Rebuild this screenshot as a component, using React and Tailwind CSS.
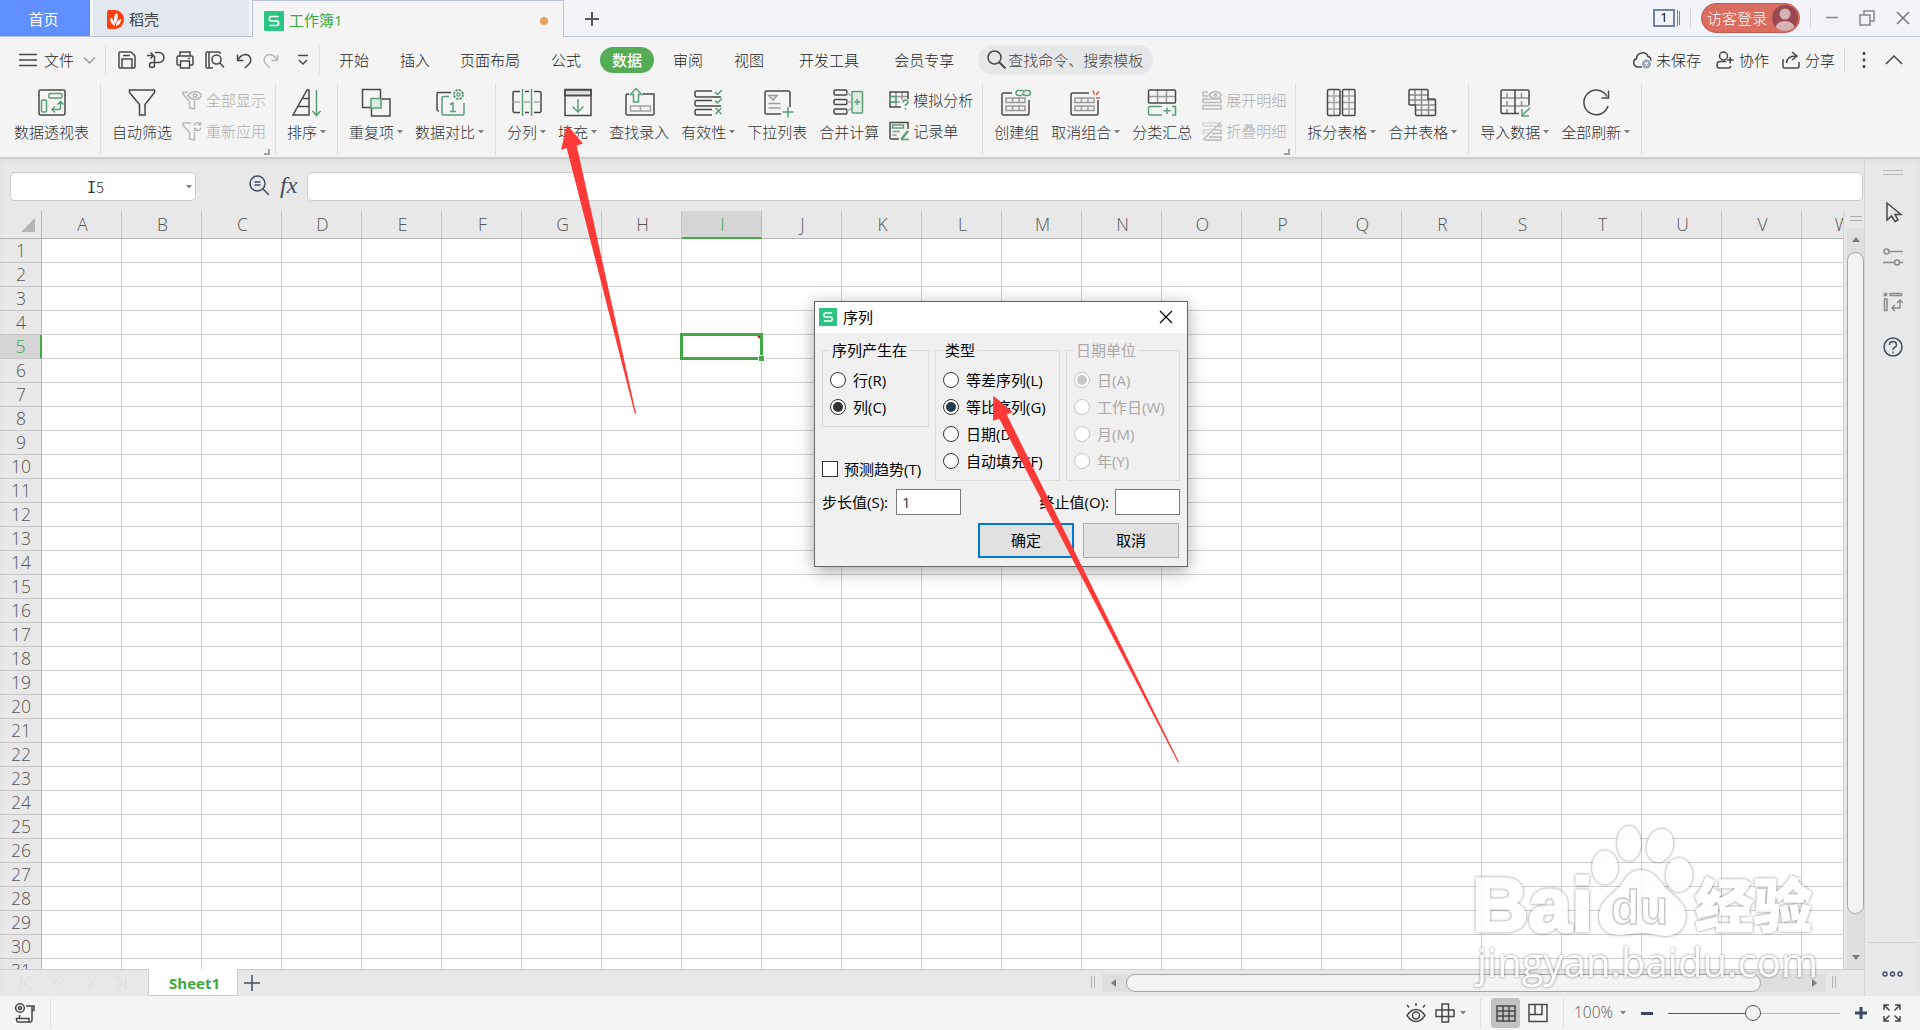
import React from 'react';
import clsx from 'clsx';

const COLUMNS = 'ABCDEFGHIJKLMNOPQRSTUVW'.split('');
const ROWS = Array.from({ length: 31 }, (_, i) => i + 1);

const DARK = '#484848';
const GREEN = '#5a9f79';
const GREY = '#b9b9b9';

function Svg({ w = 32, h = w, color = DARK, sw = 1.5, className, children }) {
  return (
    <svg
      width={w}
      height={h}
      viewBox={`0 0 ${w} ${h}`}
      fill="none"
      stroke={color}
      strokeWidth={sw}
      className={clsx('shrink-0', className)}
    >
      {children}
    </svg>
  );
}

function Caret({ className }) {
  return (
    <svg width="6" height="4" viewBox="0 0 6 4" className={clsx('shrink-0', className)}>
      <path d="M0 0h6L3 3.6z" fill="#808080" />
    </svg>
  );
}

function SheetLogo({ className }) {
  return (
    <svg width="20" height="20" viewBox="0 0 20 20" className={clsx('shrink-0', className)}>
      <rect width="20" height="20" rx="1" fill="#2bc483" />
      <path d="M14.5 5.5H7a1.5 1.5 0 0 0-1.5 1.5v1.5A1.5 1.5 0 0 0 7 10h6a1.5 1.5 0 0 1 1.5 1.5V13a1.5 1.5 0 0 1-1.5 1.5H5.5" fill="none" stroke="#fff" strokeWidth="1.7" />
    </svg>
  );
}

/* Ribbon icons, 32x32 */
const icons = {
  pivot: (
    <Svg>
      <rect x="3" y="4" width="26" height="25" rx="1.5" />
      <g stroke={GREEN}>
        <rect x="13" y="7.5" width="13" height="4.5" rx="1" />
        <rect x="5.5" y="14" width="5" height="12" rx="1" />
        <path d="M24.5 16v5.5a2 2 0 0 1-2 2H16M21.5 18.5l3-3 3 3M19 20.5l-3 3 3 3" />
      </g>
    </Svg>
  ),
  filter: (
    <Svg className="-ml-px">
      <path d="M3.5 4h25v2.5L19 18.5V29h-5.5V18.5L3.5 6.5z" />
    </Svg>
  ),
  sort: (
    <Svg className="-ml-0.5">
      <path d="M19 4v25H3L17 4zM12.5 12.5H19M8 20.5h11" />
      <path d="M26.5 4v25M22.5 25l4 4.5 4-4.5" stroke={GREEN} />
    </Svg>
  ),
  duplicate: (
    <Svg>
      <path d="M12 21.5H2.5V3.5h18V12M21 13h9v17H11.5v-8" />
      <rect x="11" y="12.5" width="10" height="9.5" stroke={GREEN} fill="#dcebe2" />
    </Svg>
  ),
  compare: (
    <Svg>
      <path d="M17 6.5H4.5A1.5 1.5 0 0 0 3 8v15.5a1.5 1.5 0 0 0 1.5 1.5H5" />
      <g stroke={GREEN}>
        <path d="M15 10.5H9.5A1.5 1.5 0 0 0 8 12v15.5A1.5 1.5 0 0 0 9.5 29h19a1.5 1.5 0 0 0 1.5-1.5V17" />
        <path d="M16 18.5l3-1.5v8.5M16 25.5h6" />
        <circle cx="24.5" cy="8.5" r="4.5" strokeDasharray="2.5 1" strokeWidth="2" />
        <circle cx="24.5" cy="8.5" r="1.7" strokeWidth="1.2" />
      </g>
    </Svg>
  ),
  split: (
    <Svg>
      <path d="M9 5.5H3.5A1.5 1.5 0 0 0 2 7v18a1.5 1.5 0 0 0 1.5 1.5H9M14 5.5h4M14 26.5h4M23 5.5h5.5A1.5 1.5 0 0 1 30 7v18a1.5 1.5 0 0 1-1.5 1.5H23" />
      <path d="M2 16h7M13 16h6M23 16h7" stroke="#aaa" />
      <path d="M11.5 3v27M20.5 3v27" stroke={GREEN} />
    </Svg>
  ),
  fill: (
    <Svg>
      <path d="M3 4h26v5.5H3z" fill="#dedede" />
      <path d="M3 3.5h26v26H3zM3 9.5h26" />
      <path d="M16 13v12M10.5 20.5L16 26l5.5-5.5" stroke={GREEN} />
    </Svg>
  ),
  lookup: (
    <Svg className="ml-0.5">
      <path d="M5 8H3.5A1.5 1.5 0 0 0 2 9.5v18A1.5 1.5 0 0 0 3.5 29h25a1.5 1.5 0 0 0 1.5-1.5V8H18.5" />
      <path d="M6.5 20h20v5h-20zM16.5 20v5" stroke="#a3a3a3" />
      <path d="M12 2.5l5.5 6H14.5V16h-5V8.5h-3z" stroke={GREEN} />
    </Svg>
  ),
  valid: (
    <Svg>
      <path d="M20 5H4.5Q3 5 3 6.5v3Q3 11 4.5 11H29M20 14.5H4.5Q3 14.5 3 16v2.5Q3 20 4.5 20H29M20 23.5H4.5Q3 23.5 3 25v2.5Q3 29 4.5 29H20" />
      <path d="M23 6l2.5 2.5L30 4M23 14.5l2.5 2.5L30 12.5M23.5 22l6 6M29.5 22l-6 6" stroke={GREEN} />
    </Svg>
  ),
  dropdown: (
    <Svg className="ml-0.5">
      <path d="M19 28H4.5A1.5 1.5 0 0 1 3 26.5v-20A1.5 1.5 0 0 1 4.5 5h22A1.5 1.5 0 0 1 28 6.5V21" />
      <path d="M7 9.5h8l-4 4.5zM6.5 17.5h12M6.5 22h12" stroke="#9d9d9d" />
      <path d="M26 21v10.5M20.5 26h11" stroke={GREEN} />
    </Svg>
  ),
  consolidate: (
    <Svg className="-ml-0.5">
      <rect x="2" y="4" width="13" height="5" rx="1.5" />
      <rect x="2" y="13.5" width="13" height="5" rx="1.5" />
      <rect x="2" y="23" width="13" height="5" rx="1.5" />
      <path d="M15 6.5l4 3M15 16h4M15 25.5l4-3" stroke="#aaa" />
      <rect x="20" y="5.5" width="10.5" height="21.5" rx="1" stroke={GREEN} fill="#e0ebe4" />
      <path d="M25.25 13v6M22.25 16h6" stroke={GREEN} />
    </Svg>
  ),
  group: (
    <Svg className="-ml-[3px]">
      <path d="M13 7H4.5A1.5 1.5 0 0 0 3 8.5v19A1.5 1.5 0 0 0 4.5 29h24a1.5 1.5 0 0 0 1.5-1.5V14" />
      <path d="M7 12h19v4.5H7zM7 20h19v4.5H7zM13.5 12v4.5M20 12v4.5M13.5 20v4.5M20 20v4.5" stroke="#999" />
      <path d="M23 9.5h-3.5a2.5 2.5 0 0 1 0-5h3a2.5 2.5 0 0 1 2.5 2.5M25.5 4.5H29a2.5 2.5 0 0 1 0 5h-3A2.5 2.5 0 0 1 23.5 7" stroke={GREEN} />
    </Svg>
  ),
  ungroup: (
    <Svg className="-ml-[3px]">
      <path d="M21 7H4.5A1.5 1.5 0 0 0 3 8.5v19A1.5 1.5 0 0 0 4.5 29h24a1.5 1.5 0 0 0 1.5-1.5V14" />
      <path d="M7 12h19v4.5H7zM7 20h19v4.5H7zM13.5 12v4.5M20 12v4.5M13.5 20v4.5M20 20v4.5" stroke="#999" />
      <path d="M25 4.5l1.5 4M31 5.5l-3 3.5M32 12h-4" stroke="#dc5b55" />
    </Svg>
  ),
  subtotal: (
    <Svg>
      <path d="M2.5 10.5h27M11.5 4v12.5M20.5 4v12.5" stroke="#999" />
      <rect x="2.5" y="4" width="27" height="13" rx="1" />
      <path d="M16 20.5H4Q2.5 20.5 2.5 22v6q0 1 1.5 1h12M26 20.5h3.5V29H26M21 21.5v6.5M17.5 24.75h7" stroke={GREEN} />
    </Svg>
  ),
  splitTable: (
    <Svg className="-ml-0.5">
      <path d="M9 3.5v26M3 10h12M3 16.5h12M3 23h12M24 3.5v26M17.5 10H30M17.5 16.5H30M17.5 23H30" stroke="#a5a5a5" />
      <rect x="2.5" y="3.5" width="12.5" height="26" rx="1.5" />
      <rect x="17.5" y="3.5" width="12.5" height="26" rx="1.5" />
    </Svg>
  ),
  mergeTable: (
    <Svg className="-ml-0.5">
      <path d="M9 4v15M15.5 4v25M22.5 13v16M3 9h19M3 14h26M10 19h19M10 24h19" stroke="#8d8d8d" />
      <path d="M4 3.5h17q1 0 1 1V13h6q1.5 0 1.5 1.5V28q0 1.5-1.5 1.5H11q-1.5 0-1.5-1.5v-9H4q-1 0-1-1V4.5q0-1 1-1z" />
    </Svg>
  ),
  importData: (
    <Svg>
      <path d="M2 12h28M2 20h28M8 7v5M8 15v5M8 23v4M22.5 7v5M22.5 15v5" stroke="#909090" />
      <path d="M20 27.5H3.5A1.5 1.5 0 0 1 2 26V5.5A1.5 1.5 0 0 1 3.5 4h25A1.5 1.5 0 0 1 30 5.5V19M16 4v23.5" />
      <path d="M31 22l-8 7.5M23 23v7h7" stroke={GREEN} />
    </Svg>
  ),
  refresh: (
    <Svg>
      <path d="M28 20A12.3 12.3 0 1 1 27 10.5M28.5 4.5v7.5h-7" />
    </Svg>
  ),
};

/* Small icons for the two-row stacks, 20x20 */
const smallIcons = {
  showAll: (
    <Svg w={20} color={GREY}>
      <path d="M6 2H1v2l6.5 7.5V18l5 1v-8" />
      <path d="M6 5.5Q9 1.5 13 1.5t7 4Q17 9.5 13 9.5T6 5.5z" />
      <circle cx="13" cy="5.5" r="1.8" />
    </Svg>
  ),
  reapply: (
    <Svg w={20} color={GREY}>
      <path d="M9 2H1v2l6.5 7.5V18l5 1v-8" />
      <path d="M12 4.5A3.5 3.5 0 0 1 18 3M18.5 1v3H16M19 6.5a3.5 3.5 0 0 1-6 2M12.5 10V7.5H15" />
    </Svg>
  ),
  whatIf: (
    <Svg w={20}>
      <path d="M1 6.5h18M7 2v15M13 2v8M1 12h10" stroke="#999" />
      <path d="M12 17H1V2h18v7" />
      <path d="M1 6.5h6V12H1zM14 12.5q0-2.5 2.5-2.5t2.5 2.2q0 1.3-2.5 2.8v1M16.5 18v1.5" stroke={GREEN} />
    </Svg>
  ),
  form: (
    <Svg w={20}>
      <path d="M10 18H2q-1 0-1-1V1.5h18V8" />
      <path d="M3.5 4h11v3h-11z" stroke={GREEN} />
      <path d="M3.5 10.5H11M3.5 14h4" stroke="#999" />
      <path d="M19 10l-6.5 8" stroke={GREEN} strokeWidth="2.5" />
      <path d="M12 18.5h8" stroke={GREEN} />
    </Svg>
  ),
  expand: (
    <Svg w={20} color={GREY}>
      <path d="M6 2H1v4h5M1 9h18v3.5H1zM1 15.5h18V19H1z" />
      <path d="M7 5Q10 1.5 13.5 1.5T20 5q-3 3.5-6.5 3.5T7 5z" />
      <circle cx="13.5" cy="5" r="1.2" />
    </Svg>
  ),
  collapse: (
    <Svg w={20} color={GREY}>
      <path d="M1 2h16M1 5h13M1 2v3M1 9h9M1 9v3h6" opacity="0.5" />
      <path d="M19 3v2.5h-3M13 9h6v3.5h-9M7 16h12v3H3" />
      <path d="M1 19L19 1" />
    </Svg>
  ),
};

function RibbonItem({ icon, label, caret }) {
  return (
    <div className="flex flex-col items-center">
      {icons[icon]}
      <div className="mt-[3px] flex h-[22px] items-center gap-[3px]">
        <span>{label}</span>
        {caret && <Caret />}
      </div>
    </div>
  );
}

function RibbonStack({ items, disabled, corner }) {
  return (
    <div className={clsx('relative -mx-0.5 flex flex-col gap-[9px] pt-[3px]', disabled && 'text-[#adadad]')}>
      {items.map(([icon, label]) => (
        <div key={label} className="flex h-[22px] items-center gap-1">
          {smallIcons[icon]}
          <span>{label}</span>
        </div>
      ))}
      {corner && <div className="absolute right-[-4px] bottom-0 h-1.5 w-1.5 border-r-2 border-b-2 border-[#a0a0a0]" />}
    </div>
  );
}

function RibbonGroup({ children, className }) {
  return <div className={clsx('flex h-[72px] gap-3 border-r border-[#dedede] px-[11px] pt-[3px]', className)}>{children}</div>;
}

function TitleBar() {
  return (
    <div className="flex h-[37px] bg-[#f2f4f9] text-[15px]">
      <div className="flex w-[90px] items-center justify-center border-b border-[#b9c3d9] bg-[#608fff] pt-[3px] pr-[3px] font-normal text-white">首页</div>
      <div className="w-[3px] border-b border-[#b9c3d9]" />
      <div className="flex w-[156px] items-center gap-[5px] border-b border-[#b9c3d9] bg-[#e3e7f0] pt-[3px] pl-[14px] font-normal text-[#444]">
        <svg width="17" height="19" viewBox="0 0 17 19">
          <path d="M2 0h6a9 9.5 0 0 1 0 19H2a2 2 0 0 1-2-2V2a2 2 0 0 1 2-2z" fill="#fd4210" />
          <path d="M8 16C4 14 3 11 3.5 8c3 1 4 4 4.5 8zM8 14C6 9 7 5 10 3c1.5 4 .5 8-2 11zM9 16c0-4 2-6 5-7 0 4-2 6-5 7z" fill="#fff" />
        </svg>
        <span>稻壳</span>
      </div>
      <div className="w-[3px] border-b border-[#b9c3d9]" />
      <div className="flex w-[312px] items-center border-x border-t border-[#b9c3d9] bg-[#f4f4f4] pt-[3px] pl-[11px] font-normal text-[#3ea83e]">
        <SheetLogo />
        <span className="ml-[5px]">工作簿1</span>
        <div className="mr-[15px] ml-auto h-2 w-2 rounded-full bg-[#e6a15c]" />
      </div>
      <div className="flex flex-1 items-center border-b border-[#b9c8dd]">
        <Svg w={16} sw={2} color="#5a5a5a" className="mt-0.5 ml-5"><path d="M8 1v14M1 8h14" /></Svg>
        <div className="ml-auto flex h-[18px] w-[22px] items-center justify-center border-2 border-[#76829f] text-[13px] font-normal text-black">1</div>
        <div className="ml-0.5 h-4 w-px bg-[#76829f]" />
        <div className="ml-px h-3.5 w-px bg-[#76829f]" />
        <div className="ml-[10px] h-[22px] w-px bg-[#d3d6dc]" />
        <div className="ml-[10px] flex h-[30px] w-[99px] items-center justify-between rounded-full border border-[#c8594e] bg-[#da6d60] pr-px pl-[5px] text-white">
          <span>访客登录</span>
          <svg width="26" height="26" viewBox="0 0 26 26">
            <defs>
              <clipPath id="avatar"><circle cx="13" cy="13" r="13" /></clipPath>
            </defs>
            <g clipPath="url(#avatar)">
              <rect width="26" height="26" fill="#984850" />
              <circle cx="13" cy="9" r="5.5" fill="#d6b2b5" />
              <ellipse cx="13" cy="23" rx="9.5" ry="7" fill="#d6b2b5" />
            </g>
          </svg>
        </div>
        <div className="ml-[10px] h-[22px] w-px bg-[#d3d6dc]" />
        <Svg w={14} color="#888" className="ml-[14px]"><path d="M1 6.5h12" /></Svg>
        <Svg w={16} color="#888" className="ml-[20px]"><path d="M1 5h10v10H1zM5 5V1h10v10h-4" /></Svg>
        <Svg w={14} color="#777" className="mr-[10px] ml-[21px]"><path d="M1 1l12 12M13 1L1 13" /></Svg>
      </div>
    </div>
  );
}

function MenuBar() {
  return (
    <div className="flex h-[46px] items-center text-[15px] text-[#222]">
      <Svg w={18} className="ml-[19px]"><path d="M0 3.5h18M0 9h18M0 14.5h18" /></Svg>
      <span className="ml-[7px]">文件</span>
      <Svg w={13} color="#999" className="ml-[9px]"><path d="M1 3.5L6.5 9 12 3.5" /></Svg>
      <div className="ml-[9px] h-[30px] w-px bg-[#dcdcdc]" />
      <Svg w={18} className="ml-3">
        <path d="M1 2q0-1 1-1h11l4 4v11q0 1-1 1H2q-1 0-1-1zM4 17V8h10v9M5 4.5h7" />
      </Svg>
      <Svg w={18} className="ml-[11px]">
        <path d="M0 4.5h6M3.5 1.5l3 3-3 3M8 1.5h4a5 5 0 0 1 0 10H5a2.5 2.5 0 1 0 2.5 2.5V5" />
      </Svg>
      <Svg w={18} className="ml-[11px]">
        <path d="M4 5V1h10v4M4 14H2q-1 0-1-1V6.5Q1 5 2.5 5h13Q17 5 17 6.5V13q0 1-1 1h-2M4.5 10h9v7h-9zM12 7.5h2" />
      </Svg>
      <Svg w={20} h={18} className="ml-[11px]">
        <path d="M8 17H2q-1 0-1-1V2q0-1 1-1h12q1 0 1 1v1M4 1v16M15 12l4 4.5" />
        <circle cx="11.5" cy="8.5" r="4.5" />
      </Svg>
      <Svg w={16} h={18} className="ml-[11px]"><path d="M1.5 3.5v6h6M1.5 9.5Q5 3.5 9.5 3.5A5.5 5.5 0 0 1 13 13l-4 4" /></Svg>
      <Svg w={16} h={18} color={GREY} className="ml-[11px]"><path d="M14.5 3.5v6h-6M14.5 9.5Q11 3.5 6.5 3.5A5.5 5.5 0 0 0 3 13l4 4" /></Svg>
      <Svg w={10} h={14} className="ml-[19px]"><path d="M0 2.5h10M1 7l4 4 4-4" /></Svg>
      <div className="ml-[11px] h-[30px] w-px bg-[#dcdcdc]" />
      <span className="ml-[19px]">开始</span>
      <span className="ml-[31px]">插入</span>
      <span className="ml-[30px]">页面布局</span>
      <span className="ml-[31px]">公式</span>
      <div className="ml-[19px] flex h-[26px] w-[54px] items-center justify-center rounded-full bg-[#54ad54] font-medium text-white">数据</div>
      <span className="ml-[19px]">审阅</span>
      <span className="ml-[31px]">视图</span>
      <span className="ml-[35px]">开发工具</span>
      <span className="ml-[35px]">会员专享</span>
      <div className="ml-[24px] flex h-[30px] w-[175px] items-center rounded-full bg-[#e6e7e8] pl-[9px] text-[#404040]">
        <Svg w={20}><circle cx="7.5" cy="7.5" r="6.5" /><path d="M12 12l6.5 6.5" strokeWidth="2" /></Svg>
        <span className="ml-px">查找命令、搜索模板</span>
      </div>
      <Svg w={20} h={18} className="ml-auto">
        <path d="M10 16H5a4.500 4.500 0 0 1-.5-8.500A6 6 0 0 1 16 5.500q3 .5 3 4" />
        <circle cx="14.5" cy="13" r="4.5" fill="#9aa5b6" stroke="none" />
        <path d="M13 11.5l3 3M16 11.5l-3 3" stroke="#fff" strokeWidth="1.2" />
      </Svg>
      <span className="ml-1">未保存</span>
      <Svg w={18} className="ml-[15px]">
        <circle cx="7.5" cy="5" r="4" />
        <path d="M10.5 10.5H4Q1 10.5 1 14q0 3 2 3h10q1.5 0 1.5-2M11 9h6.5M14.25 6v6.5" />
      </Svg>
      <span className="ml-[5px]">协作</span>
      <Svg w={18} className="ml-[13px]"><path d="M1 8v7.5Q1 17 2.5 17h13q1.5 0 1.5-1.5V11M4.5 12Q5 5 13.5 5M10 1l5 4-5 4" /></Svg>
      <span className="ml-[5px]">分享</span>
      <div className="ml-[9px] h-[26px] w-px bg-[#dcdcdc]" />
      <Svg w={4} h={18} className="ml-[17px]"><path d="M2 1v3M2 7.5v3M2 14v3" strokeWidth="2.5" /></Svg>
      <Svg w={18} h={12} className="mr-[17px] ml-[19px]"><path d="M1 10l8-8 8 8" /></Svg>
    </div>
  );
}

function Ribbon() {
  return (
    <div className="flex h-[74px] text-[15px] leading-[22px] whitespace-nowrap text-[#303030]">
      <RibbonGroup className="pl-[14px]">
        <RibbonItem icon="pivot" label="数据透视表" />
      </RibbonGroup>
      <RibbonGroup>
        <RibbonItem icon="filter" label="自动筛选" />
        <RibbonStack disabled corner items={[['showAll', '全部显示'], ['reapply', '重新应用']]} />
      </RibbonGroup>
      <RibbonGroup>
        <RibbonItem icon="sort" label="排序" caret />
      </RibbonGroup>
      <RibbonGroup>
        <RibbonItem icon="duplicate" label="重复项" caret />
        <RibbonItem icon="compare" label="数据对比" caret />
      </RibbonGroup>
      <RibbonGroup>
        <RibbonItem icon="split" label="分列" caret />
        <RibbonItem icon="fill" label="填充" caret />
        <RibbonItem icon="lookup" label="查找录入" />
        <RibbonItem icon="valid" label="有效性" caret />
        <RibbonItem icon="dropdown" label="下拉列表" />
        <RibbonItem icon="consolidate" label="合并计算" />
        <RibbonStack items={[['whatIf', '模拟分析'], ['form', '记录单']]} />
      </RibbonGroup>
      <RibbonGroup>
        <RibbonItem icon="group" label="创建组" />
        <RibbonItem icon="ungroup" label="取消组合" caret />
        <RibbonItem icon="subtotal" label="分类汇总" />
        <RibbonStack disabled corner items={[['expand', '展开明细'], ['collapse', '折叠明细']]} />
      </RibbonGroup>
      <RibbonGroup>
        <RibbonItem icon="splitTable" label="拆分表格" caret />
        <RibbonItem icon="mergeTable" label="合并表格" caret />
      </RibbonGroup>
      <RibbonGroup>
        <RibbonItem icon="importData" label="导入数据" caret />
        <RibbonItem icon="refresh" label="全部刷新" caret />
      </RibbonGroup>
    </div>
  );
}

function FormulaBar() {
  return (
    <div className="flex h-[54px] items-start pt-[15px]">
      <div className="ml-[10px] flex h-[29px] w-[186px] items-center rounded-[5px] border border-[#cbcbcb] bg-white">
        <span className="mt-0.5 ml-[76px] font-['Noto_Sans_CJK_SC',sans-serif] text-[15px] text-[#333]">
          <span className="font-['DejaVu_Sans_Mono',monospace] text-[15px]">I</span>5
        </span>
        <Caret className="mr-[3px] ml-auto" />
      </div>
      <Svg w={21} color="#414c66" className="mt-[3px] ml-[53px]">
        <circle cx="8.5" cy="8.5" r="7.5" />
        <path d="M14 14l6 6M5.5 7h6M5.5 10h6" />
      </Svg>
      <span className="ml-[10px] w-[27px] font-['Liberation_Serif',serif] text-[24px] leading-[26px] text-[#414c66] italic">fx</span>
      <div className="h-[29px] flex-1 rounded-[5px] border border-[#cbcbcb] bg-white" />
      <div className="w-px" />
    </div>
  );
}

function Grid() {
  return (
    <div className="relative h-[758px] w-[1843px] overflow-hidden font-normal">
      <div className="flex h-7 w-[1882px]">
        <div className="flex w-[42px] items-end justify-end border-r border-b border-[#b4b4b4] pr-1.5 pb-1.5">
          <svg width="14" height="14"><path d="M14 0v14H0z" fill="#b5b5b5" /></svg>
        </div>
        {COLUMNS.map((c) => (
          <div
            key={c}
            className={clsx(
              'flex w-20 items-center justify-center border-r pl-[2px] text-[17.5px] font-light',
              c === 'I'
                ? 'border-r-[#bbb] border-b-2 border-b-[#43aa43] bg-[#d5d5d5] text-[#3ea83e]'
                : 'border-r-[#c6c6c6] border-b border-b-[#b4b4b4] text-[#555]'
            )}
          >
            {c}
          </div>
        ))}
      </div>
      {ROWS.map((r) => (
        <div key={r} className="flex h-6 w-[1882px]">
          <div
            className={clsx(
              'flex w-[42px] items-center justify-center border-b border-b-[#c6c6c6] pl-px text-[17.5px] font-light',
              r === 5 ? 'border-r-2 border-r-[#43aa43] bg-[#d5d5d5] text-[#3ea83e]' : 'border-r border-r-[#b4b4b4] text-[#555]'
            )}
          >
            {r}
          </div>
          {COLUMNS.map((c) => (
            <div key={c} className="w-20 border-r border-b border-[#d0d0d0] bg-white" />
          ))}
        </div>
      ))}
      {/* active cell */}
      <div className="absolute top-[122px] left-[680px] h-[27px] w-[83px] border-[3px] border-[#43aa43]">
        <div className="absolute top-0 right-0 border-t-[3px] border-l-[3px] border-t-[#e00] border-l-transparent" />
        <div className="absolute -right-1 -bottom-1 h-[5px] w-[5px] bg-[#43aa43] outline outline-white" />
      </div>
    </div>
  );
}

function VerticalScroll() {
  return (
    <div className="flex w-[21px] flex-col items-end border-l border-[#cfcfcf]">
      <div className="flex h-[17px] w-[17px] flex-col items-center gap-[3px] pt-[5px]">
        <div className="h-px w-3 shrink-0 bg-[#aaa]" />
        <div className="h-px w-3 shrink-0 bg-[#aaa]" />
      </div>
      <div className="flex w-[17px] flex-1 flex-col items-center bg-[#dedede]">
        <svg width="8" height="5" className="mt-[9px]"><path d="M0 5h8L4 0z" fill="#7d7d7d" /></svg>
        <div className="mt-[10px] h-[662px] w-[17px] rounded-full border border-[#a6a6a6] bg-[#f3f3f3]" />
        <svg width="8" height="5" className="mt-auto mb-[9px]"><path d="M0 0h8L4 5z" fill="#7d7d7d" /></svg>
      </div>
    </div>
  );
}

function SheetTabs() {
  return (
    <div className="flex h-[27px] items-start border-t border-[#cdcdcd]">
      <Svg w={108} h={16} color="#dadada" sw={1} className="mt-[5px] ml-5">
        <path d="M1 1v14M11 1L4 8l7 7M41 1l-7 7 7 7M66 1l7 7-7 7M96 1l7 7-7 7M105.5 1v14" />
      </Svg>
      <div className="-mt-px ml-[20px] flex h-[27px] w-[90px] items-center justify-center border-x border-b border-[#cdcdcd] bg-white pt-0.5 pl-[3px] text-[15px] font-bold text-[#3ea83e]">Sheet1</div>
      <Svg w={16} color="#414c66" className="mt-[5px] ml-[6px]"><path d="M8 0v16M0 8h16" /></Svg>
      <div className="mt-[6px] ml-auto h-3 w-1 border-x border-[#b5b5b5]" />
      <div className="mt-1 ml-[7px] flex h-[18px] w-[724px] items-center bg-[#dedede]">
        <svg width="5" height="8" className="ml-[9px]"><path d="M5 0v8L0 4z" fill="#7d7d7d" /></svg>
        <div className="ml-[10px] h-[18px] w-[635px] rounded-full border border-[#a6a6a6] bg-[#f3f3f3]" />
        <svg width="5" height="8" className="mr-[9px] ml-auto"><path d="M0 0v8L5 4z" fill="#7d7d7d" /></svg>
      </div>
      <div className="mt-[6px] mr-[28px] ml-[6px] h-3 w-1 border-x border-[#b5b5b5]" />
    </div>
  );
}

function SidePane() {
  return (
    <div className="flex w-[56px] flex-col items-center border-l border-[#d2d2d2] pt-[13px]">
      <div className="h-[5px] w-5 shrink-0 border-y border-[#b5b5b5]" />
      <Svg w={20} h={22} className="mt-[26px]"><path d="M4 2v17l4.5-4 3.5 5.5 3-1.5-3-5.5h6z" /></Svg>
      <Svg w={20} color="#8c8c8c" className="mt-[24px]">
        <path d="M6 4.5h14M0 15.5h11M17 15.5h3" />
        <circle cx="3.5" cy="4.5" r="2.5" />
        <circle cx="14" cy="15.5" r="2.5" />
      </Svg>
      <Svg w={20} color="#8c8c8c" className="mt-[25px]">
        <path d="M1.5 1.5h2v2h-2zM7 1.5h11.5v2H7zM1.5 7h2.5v11.5H1.5zM17 9v7H9M14 11l3-3 3 3M12 13l-3 3 3 3" />
      </Svg>
      <Svg w={20} color="#414c66" className="mt-[25px]">
        <circle cx="10" cy="10" r="9" />
        <path d="M6.5 8q0-3.5 3.5-3.5T13.5 8q0 1.5-2 2.5T10 13M10 14.5v1.8" />
      </Svg>
      <div className="mt-auto h-px w-[49px] bg-[#cfcfcf]" />
      <Svg w={21} h={6} color="#414c66" className="mt-[28px] mb-[19px]">
        <circle cx="3" cy="3" r="2" /><circle cx="10.5" cy="3" r="2" /><circle cx="18" cy="3" r="2" />
      </Svg>
    </div>
  );
}

function StatusBar() {
  return (
    <div className="flex h-[34px] items-center bg-[#f4f4f4]">
      <Svg w={20} className="ml-[15px]">
        <circle cx="5" cy="5" r="4.3" /><circle cx="5" cy="5" r="1.5" />
        <path d="M11 3h8v4.5h-2V17q0 2-2 2H3q-1.5 0-1.5-3.5H14V19M4.5 12v3.5M17 3v4.5" />
      </Svg>
      <div className="ml-[15px] h-[30px] w-px bg-[#e0e0e0]" />
      <Svg w={20} className="ml-auto">
        <path d="M1 12.5Q5 6.5 10 6.5t9 6Q15 18.5 10 18.5T1 12.5zM10 0v3M1 2l2 2.5M19 2l-2 2.5" />
        <circle cx="10" cy="12.5" r="3.5" />
      </Svg>
      <Svg w={20} className="ml-[9px]">
        <path d="M1 7h18v6.5H1zM7 1h6.5v18H7z" />
      </Svg>
      <Caret className="ml-[5px]" />
      <div className="ml-[14px] h-[30px] w-px bg-[#e0e0e0]" />
      <div className="ml-[10px] flex h-[30px] w-[29px] items-center justify-center rounded-[3px] bg-[#c2c2c2]">
        <Svg w={20} h={18}><path d="M1 2h18v15H1zM1 7h18M1 12h18M7 2v15M13 2v15" /></Svg>
      </div>
      <Svg w={20} className="ml-2"><path d="M1 1.5h18v17H1zM7 1.5v10h7v-10M1 11.5h6" /></Svg>
      <div className="ml-[15px] h-[30px] w-px bg-[#e0e0e0]" />
      <span className="ml-[10px] w-[41px] text-[15.5px] text-[#555]">100%</span>
      <Caret className="ml-[5px]" />
      <div className="ml-[15px] h-[3px] w-3 bg-[#3c4762]" />
      <div className="ml-[15px] flex w-[172px] items-center">
        <div className="h-px w-[77px] bg-[#555]" />
        <div className="h-4 w-4 rounded-full border-[1.5px] border-[#555] bg-[#f3f3f3]" />
        <div className="h-px flex-1 bg-[#b5b5b5]" />
      </div>
      <Svg w={12} sw={3} color="#3c4762" className="ml-[15px]"><path d="M6 0v12M0 6h12" /></Svg>
      <Svg w={18} className="mr-[19px] ml-4">
        <path d="M1 6V1h5M1 1l5.5 5.5M12 1h5v5M17 1l-5.5 5.5M1 12v5h5M1 17l5.5-5.5M12 17h5v-5M17 17l-5.5-5.5" />
      </Svg>
    </div>
  );
}

function Radio({ label, checked, disabled, focused }) {
  return (
    <div className={clsx('flex h-[27px] items-center gap-[7px]', disabled ? 'text-[#a8a8a8]' : 'text-black')}>
      <div
        className={clsx(
          'flex h-4 w-4 items-center justify-center rounded-full border bg-white',
          disabled ? 'border-[#c5c5c5]' : 'border-[#333]'
        )}
      >
        {checked && (
          <div className={clsx('h-2.5 w-2.5 rounded-full', disabled ? 'bg-[#c8c8c8]' : focused ? 'bg-[#26394b]' : 'bg-[#333]')} />
        )}
      </div>
      <span>{label}</span>
    </div>
  );
}

function OptionGroup({ title, disabled, className, children }) {
  return (
    <div className={clsx('border border-[#dcdcdc] px-[7px]', className)}>
      <div className="-mt-[12px] mb-[5px] flex h-[22px]">
        <span className={clsx('bg-[#f0f0f0] px-0.5', disabled && 'text-[#a8a8a8]')}>{title}</span>
      </div>
      {children}
    </div>
  );
}

function SeriesDialog() {
  return (
    <div className="absolute top-[301px] left-[814px] h-[266px] w-[374px] border border-[#666] bg-[#f0f0f0] text-[15px] leading-[22px] font-normal whitespace-nowrap text-black shadow-[0_4px_16px_rgba(0,0,0,0.35)]">
      <div className="flex h-[31px] items-center bg-white pb-px pl-1">
        <SheetLogo className="h-[18px] w-[18px]" />
        <span className="ml-1.5">序列</span>
        <Svg w={14} color="#000" sw={1.2} className="mr-[14px] ml-auto"><path d="M1 1l12 12M13 1L1 13" /></Svg>
      </div>
      <div className="mt-[17px] flex items-start pl-[7px]">
        <div>
          <OptionGroup title="序列产生在" className="h-[77px] w-[107px]">
            <Radio label="行(R)" />
            <Radio label="列(C)" checked />
          </OptionGroup>
          <div className="mt-[31px] flex items-center gap-1.5">
            <div className="h-4 w-4 border border-[#333] bg-white" />
            <span>预测趋势(T)</span>
          </div>
        </div>
        <OptionGroup title="类型" className="ml-1.5 h-[131px] w-[125px]">
          <Radio label="等差序列(L)" />
          <Radio label="等比序列(G)" checked focused />
          <Radio label="日期(D)" />
          <Radio label="自动填充(F)" />
        </OptionGroup>
        <OptionGroup title="日期单位" disabled className="ml-1.5 h-[131px] w-[114px]">
          <Radio label="日(A)" checked disabled />
          <Radio label="工作日(W)" disabled />
          <Radio label="月(M)" disabled />
          <Radio label="年(Y)" disabled />
        </OptionGroup>
      </div>
      <div className="mt-2 flex items-center pr-[7px] pl-[7px]">
        <span className="w-[74px]">步长值(S):</span>
        <div className="flex h-[26px] w-[65px] items-center border border-[#7a7a7a] bg-white pl-[5px] text-[#26394b]">1</div>
        <span className="ml-auto">终止值(O):</span>
        <div className="ml-[6px] h-[26px] w-[65px] border border-[#7a7a7a] bg-white" />
      </div>
      <div className="mt-2 flex justify-end gap-[9px] pr-2">
        <div className="flex h-[35px] w-24 items-center justify-center border-2 border-[#0078d7] bg-[#e1e1e1] pb-0.5">确定</div>
        <div className="flex h-[35px] w-24 items-center justify-center border border-[#adadad] bg-[#e1e1e1] pb-0.5">取消</div>
      </div>
    </div>
  );
}

function Watermark() {
  return (
    <svg
      width="360"
      height="180"
      viewBox="1466 815 360 180"
      className="absolute top-[815px] left-[1466px] font-['Liberation_Sans','Noto_Sans_CJK_SC',sans-serif] opacity-85 drop-shadow-[0_0_1.5px_rgba(0,0,0,0.55)]"
      fill="#fff"
    >
      <text x="1472" y="931" fontSize="76" fontWeight="bold" textLength="121" lengthAdjust="spacingAndGlyphs" stroke="#fff" strokeWidth="3">Bai</text>
      <ellipse cx="1605" cy="867.5" rx="13" ry="17" />
      <ellipse cx="1629" cy="843.5" rx="12" ry="17.5" />
      <ellipse cx="1660" cy="845.5" rx="13" ry="17" transform="rotate(15 1660 845.5)" />
      <ellipse cx="1679" cy="875" rx="13.5" ry="17" />
      <path d="M1641 870c-12 0-15 8-21 16-8 9-21 15-21 31 0 12 9 18 20 18 9 0 14-2 23-2s14 3 24 3c12 0 20-8 20-20 0-14-13-20-21-29-7-8-12-17-24-17z" />
      <text x="1611" y="924" fontSize="48" fontWeight="bold" textLength="57" lengthAdjust="spacingAndGlyphs" stroke="#c0c0c0" strokeWidth="1.5">du</text>
      <text x="1695" y="927" fontSize="58" fontWeight="900" textLength="117" lengthAdjust="spacingAndGlyphs" stroke="#fff" strokeWidth="1.5">经验</text>
      <text x="1477" y="977" fontSize="40" textLength="341" lengthAdjust="spacingAndGlyphs" className="font-['Open_Sans',sans-serif] font-normal">jingyan.baidu.com</text>
    </svg>
  );
}

function Pointers() {
  return (
    <svg width="1920" height="1030" className="pointer-events-none absolute top-0 left-0" fill="#fd3a37">
      <path d="M567.3 125.3L583 143.5 576.7 145.5 636 413.5 634.8 413.8 566.7 148 561 149.7z" />
      <path d="M993.3 395.7L1012.7 412 1006.7 414.5 1179 762 1178 762.5 999.3 418.7 993 420.7z" />
    </svg>
  );
}

export default function App() {
  return (
    <div className="relative flex h-[1030px] w-[1920px] flex-col overflow-hidden bg-[#f4f4f4] font-['Open_Sans','Noto_Sans_CJK_SC',sans-serif] font-light whitespace-nowrap select-none">
      <TitleBar />
      <MenuBar />
      <Ribbon />
      <div className="flex h-[839px] bg-[#e8e8e8] shadow-[inset_0_3px_3px_-1px_rgba(0,0,0,0.14)]">
        <div className="flex w-[1864px] flex-col">
          <FormulaBar />
          <div className="flex h-[758px]">
            <Grid />
            <VerticalScroll />
          </div>
          <SheetTabs />
        </div>
        <SidePane />
      </div>
      <StatusBar />
      <Watermark />
      <SeriesDialog />
      <Pointers />
    </div>
  );
}
